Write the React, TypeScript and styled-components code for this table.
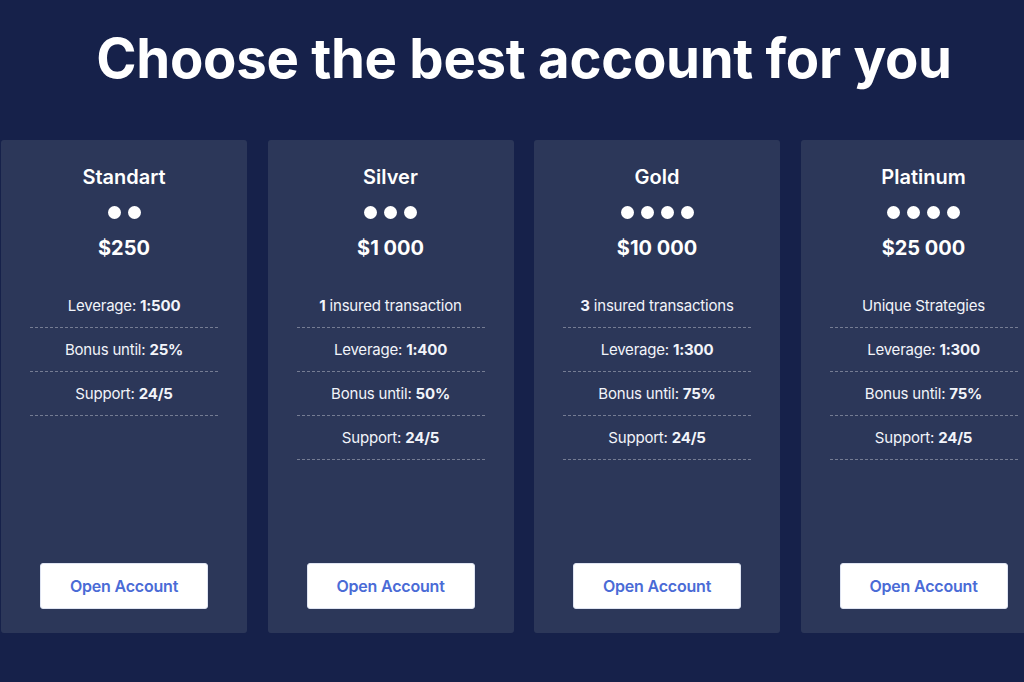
import styled, { createGlobalStyle } from 'styled-components';

const GlobalStyle = createGlobalStyle`
  html, body {
    margin: 0;
    padding: 0;
    background: #16214a;
  }
  body {
    font-family: Inter, "Noto Sans", sans-serif;
    color: #fff;
    overflow: hidden;
  }
`;

const Page = styled.div`
  width: 1024px;
  height: 682px;
  background: #16214a;
  overflow: hidden;
  display: flex;
  flex-direction: column;
`;

const Heading = styled.h1`
  margin: 24px 0 0;
  height: 68px;
  font-size: 54.5px;
  font-weight: 700;
  letter-spacing: -0.3px;
  line-height: 68px;
  text-align: center;
  color: #fff;
  padding-left: 24px;
`;

const CardRow = styled.div`
  display: flex;
  gap: 20.5px;
  margin-top: 48px;
  padding-left: 1px;
`;

const Card = styled.div`
  flex: 0 0 246px;
  height: 493px;
  background: #2c3759;
  border-radius: 3px;
  display: flex;
  flex-direction: column;
  align-items: center;
  padding: 24px 29px 24px;
  box-sizing: border-box;
`;

const CardTitle = styled.div`
  font-size: 20px;
  font-weight: 600;
  line-height: 26px;
`;

const Dots = styled.div`
  display: flex;
  gap: 7px;
  margin-top: 16px;
`;

const Dot = styled.span`
  width: 13px;
  height: 13px;
  border-radius: 50%;
  background: #fff;
`;

const Price = styled.div`
  font-size: 20px;
  font-weight: 700;
  line-height: 26px;
  margin-top: 16px;
`;

const Features = styled.ul`
  list-style: none;
  margin: 23px 0 0;
  padding: 0;
  width: 100%;
`;

const Feature = styled.li`
  height: 43px;
  border-bottom: 1px dashed rgba(255, 255, 255, 0.35);
  display: flex;
  align-items: center;
  justify-content: center;
  font-size: 15px;
  font-weight: 400;
  letter-spacing: -0.2px;
  color: #f2f4fa;

  b {
    font-weight: 700;
    margin-right: 4px;
  }

  b.after {
    margin-right: 0;
    margin-left: 4px;
  }
`;

const OpenButton = styled.button`
  margin-top: auto;
  width: 168px;
  height: 46px;
  background: #fff;
  border: 1px solid #dfe4f2;
  border-radius: 3px;
  color: #4a6bd6;
  font-family: Inter, "Noto Sans", sans-serif;
  font-size: 16px;
  font-weight: 600;
  letter-spacing: -0.2px;
  cursor: pointer;
`;

type Line = { pre?: string; label: string; value?: string };

const plans: { name: string; dots: number; price: string; lines: Line[] }[] = [
  {
    name: 'Standart',
    dots: 2,
    price: '$250',
    lines: [
      { label: 'Leverage:', value: '1:500' },
      { label: 'Bonus until:', value: '25%' },
      { label: 'Support:', value: '24/5' },
    ],
  },
  {
    name: 'Silver',
    dots: 3,
    price: '$1 000',
    lines: [
      { pre: '1', label: 'insured transaction' },
      { label: 'Leverage:', value: '1:400' },
      { label: 'Bonus until:', value: '50%' },
      { label: 'Support:', value: '24/5' },
    ],
  },
  {
    name: 'Gold',
    dots: 4,
    price: '$10 000',
    lines: [
      { pre: '3', label: 'insured transactions' },
      { label: 'Leverage:', value: '1:300' },
      { label: 'Bonus until:', value: '75%' },
      { label: 'Support:', value: '24/5' },
    ],
  },
  {
    name: 'Platinum',
    dots: 4,
    price: '$25 000',
    lines: [
      { label: 'Unique Strategies' },
      { label: 'Leverage:', value: '1:300' },
      { label: 'Bonus until:', value: '75%' },
      { label: 'Support:', value: '24/5' },
    ],
  },
];

const App = () => (
  <>
    <GlobalStyle />
    <Page>
      <Heading>Choose the best account for you</Heading>
      <CardRow>
        {plans.map((plan) => (
          <Card key={plan.name}>
            <CardTitle>{plan.name}</CardTitle>
            <Dots>
              {Array.from({ length: plan.dots }).map((_, i) => (
                <Dot key={i} />
              ))}
            </Dots>
            <Price>{plan.price}</Price>
            <Features>
              {plan.lines.map((line, i) => (
                <Feature key={i}>
                  {line.pre && <b>{line.pre}</b>}
                  {line.label}
                  {line.value && <b className="after">{line.value}</b>}
                </Feature>
              ))}
            </Features>
            <OpenButton>Open Account</OpenButton>
          </Card>
        ))}
      </CardRow>
    </Page>
  </>
);

export default App;
